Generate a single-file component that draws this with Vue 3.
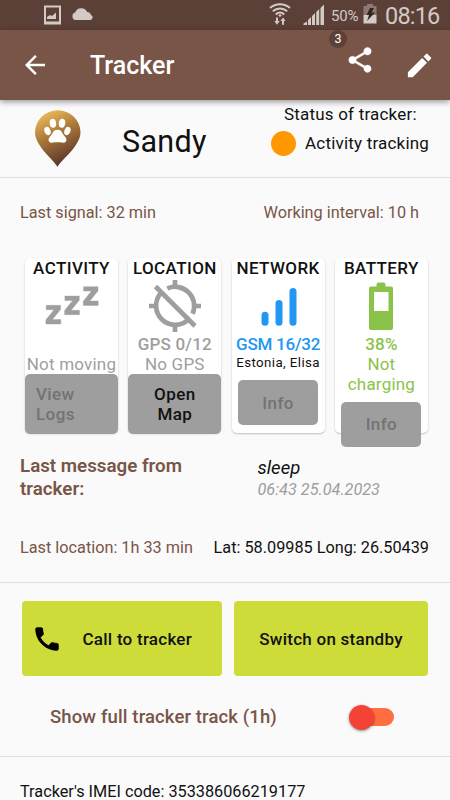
<template>
  <main class="screen">
    <div class="status-bar">
      <svg class="sys-left" width="52" height="30" viewBox="0 0 52 30" aria-hidden="true">
        <path d="M1 5.500h17v19H1zM3 7.500v14h13v-14z" fill="#d3cac6" fill-rule="evenodd" />
        <path d="M4 19v-2l3-2 2 1 4-3.500V19z" fill="#d3cac6" />
        <path d="M32.500 20a3.800 3.800 0 0 1-.3-7.400 6.400 6.400 0 0 1 11.900-.7 4.200 4.200 0 0 1 3.900 3 2.700 2.700 0 0 1-.4 5.100z" fill="#d3cac6" />
      </svg>
      <svg class="sys-wifi" width="22" height="26" viewBox="0 0 22 26" aria-hidden="true">
        <g fill="none" stroke="#d3cac6" stroke-width="1.900">
          <path d="M1 6c5.500-5 14.500-5 20 0" />
          <path d="M3.800 9.300c4.200-3.800 10.200-3.800 14.400 0" />
          <path d="M6.700 12.500c2.600-2.400 6-2.400 8.600 0" />
        </g>
        <path d="M7 15.500h2V19h1.700L8 22.700 5.300 19H7zM13 22.700V19h-1.600L14 15.500l2.600 3.500H15v3.700zM9.200 13.600l1.800-1.500 1.800 1.500-1.800 1.500z" fill="#d3cac6" />
      </svg>
      <svg class="sys-signal" width="22" height="22" viewBox="0 0 22 22" aria-hidden="true">
        <path d="M.5 21v-1.500l3.500-2v3.500zM5 21v-5l3-3v8zM9 21v-9l3-3v12zM13.200 21V8l3-3v16zM17.500 21V4L21 .5V21z" fill="#d3cac6" />
      </svg>
      <span class="percent">50%</span>
      <svg class="sys-battery" width="14" height="20" viewBox="0 0 14 20" aria-hidden="true">
        <path d="M4 0h6v2h3.500v9H.5V2H4z" fill="#8b7a73" />
        <path d="M.5 11h13v8.500H.5z" fill="#d3cac6" />
        <path d="M7 4h4L8.500 8.500H12L4 17l2-6H3.500z" fill="#33241e" />
      </svg>
      <span class="clock">08:16</span>
    </div>

    <header class="app-bar">
      <button class="icon-btn back" aria-label="Back">
        <svg width="30" height="30" viewBox="0 0 24 24">
          <path d="M20 11H7.830l5.590-5.590L12 4l-8 8 8 8 1.410-1.410L7.830 13H20v-2z" fill="#fff" />
        </svg>
      </button>
      <h1>Tracker</h1>
      <button class="icon-btn share" aria-label="Share">
        <svg width="30" height="30" viewBox="0 0 24 24">
          <path d="M18 16.080c-.76 0-1.440.3-1.960.770L8.910 12.700c.05-.23.09-.46.09-.7s-.04-.47-.09-.7l7.050-4.110c.54.5 1.250.81 2.040.81 1.660 0 3-1.340 3-3s-1.340-3-3-3-3 1.340-3 3c0 .24.04.47.09.7L8.040 9.810C7.500 9.310 6.790 9 6 9c-1.660 0-3 1.340-3 3s1.340 3 3 3c.79 0 1.500-.31 2.040-.81l7.120 4.160c-.05.21-.08.43-.08.65 0 1.610 1.310 2.920 2.920 2.920s2.920-1.310 2.920-2.920-1.310-2.920-2.920-2.920z" fill="#fff" stroke="#fff" stroke-width="0.300" />
        </svg>
        <span class="count">3</span>
      </button>
      <button class="icon-btn edit" aria-label="Edit">
        <svg width="31" height="31" viewBox="0 0 24 24">
          <path d="M3 17.250V21h3.750L17.810 9.940l-3.750-3.750L3 17.250zM20.710 7.040c.39-.39.39-1.020 0-1.410l-2.340-2.340c-.39-.39-1.020-.39-1.410 0l-1.830 1.830 3.750 3.750 1.830-1.830z" fill="#fff" />
        </svg>
      </button>
    </header>

    <section class="pet">
      <svg class="pin" width="48" height="58" viewBox="0 0 48 58" aria-hidden="true">
        <defs>
          <linearGradient id="gold" x1="0.250" y1="0" x2="0.650" y2="1">
            <stop offset="0" stop-color="#efbd5b" />
            <stop offset="0.450" stop-color="#a67537" />
            <stop offset="1" stop-color="#512d2c" />
          </linearGradient>
        </defs>
        <path d="M23.500 57C20 50 1 36 1 22.500a22.700 22.200 0 0 1 45.500 0C46.500 36 27 50 23.500 57z" fill="url(#gold)" />
        <g fill="#fff">
          <ellipse cx="18.900" cy="13.200" rx="3.200" ry="4.500" transform="rotate(-8 18.900 13.200)" />
          <ellipse cx="28" cy="13.200" rx="3.200" ry="4.500" transform="rotate(8 28 13.200)" />
          <ellipse cx="13.500" cy="21" rx="3" ry="4.300" transform="rotate(-20 13.500 21)" />
          <ellipse cx="33.400" cy="21" rx="3" ry="4.300" transform="rotate(20 33.400 21)" />
          <path d="M23.500 19.800c4.200 0 4.700 3.600 6.500 5.800 1.600 2 2.800 3.200 2.400 4.800-.5 2.100-2.500 2.500-4.400 2.200-3-.5-6-.5-9 0-1.900.3-3.900-.1-4.400-2.200-.4-1.600.8-2.800 2.400-4.800 1.800-2.200 2.300-5.800 6.500-5.800z" />
        </g>
      </svg>
      <h2>Sandy</h2>
      <div class="tracker-status">
        <p class="label">Status of tracker:</p>
        <p class="value"><i class="dot"></i><span>Activity tracking</span></p>
      </div>
    </section>

    <section class="signal-row">
      <span class="last-signal">Last signal: 32 min</span>
      <span class="interval">Working interval: 10 h</span>
    </section>

    <section class="cards">
      <article class="card activity">
        <h3>ACTIVITY</h3>
        <div class="glyph">
          <svg width="56" height="60" viewBox="0 0 56 60">
            <path id="zed" d="M2.200 29.300h14.400v4.200L8.400 43.600h8.400V48H1.900v-4.200l8.100-10.100H2.200z" fill="#9e9e9e" stroke="#9e9e9e" stroke-width="0.400" />
            <use href="#zed" x="18.700" y="-9.300" />
            <use href="#zed" x="37.400" y="-18.600" />
          </svg>
        </div>
        <p class="reading"></p>
        <p class="detail">Not moving</p>
        <button class="block left" disabled>View Logs</button>
      </article>

      <article class="card location">
        <h3>LOCATION</h3>
        <div class="glyph">
          <svg width="54" height="60" viewBox="0 0 54 60">
            <g fill="none" stroke="#9e9e9e" stroke-width="4.700">
              <path d="M19.300 12.400A19.200 19.200 0 0 1 44.600 37.700" />
              <path d="M12.900 17A19.200 19.200 0 0 0 40 44.100" />
              <path d="M7.500 10.500L47 50M27 4v7M27 49v7M1 30h7M46 30h7" />
            </g>
          </svg>
        </div>
        <p class="reading">GPS 0/12</p>
        <p class="detail">No GPS</p>
        <button class="block">Open Map</button>
      </article>

      <article class="card network">
        <h3>NETWORK</h3>
        <div class="glyph">
          <svg width="40" height="60" viewBox="0 0 40 60">
            <g fill="#2196f3">
              <rect x="3.500" y="35.700" width="7" height="14" rx="3.500" />
              <rect x="17.500" y="24" width="7" height="25.700" rx="3.500" />
              <rect x="31.500" y="12" width="7" height="37.700" rx="3.500" />
            </g>
          </svg>
        </div>
        <p class="reading">GSM 16/32</p>
        <p class="operator">Estonia, Elisa</p>
        <button class="small" disabled>Info</button>
      </article>

      <article class="card battery">
        <h3>BATTERY</h3>
        <div class="glyph">
          <svg width="26" height="60" viewBox="0 0 26 60">
            <path d="M8.500 8.500q0-2 2-2h5q2 0 2 2v2H23a2 2 0 0 1 2 2V52a2 2 0 0 1-2 2H3a2 2 0 0 1-2-2V12.500a2 2 0 0 1 2-2h5.500z" fill="#8bc34a" />
            <path d="M6 16h14.500v19H6z" fill="#fff" />
          </svg>
        </div>
        <p class="reading">38%</p>
        <p class="detail">Not charging</p>
        <button class="small" disabled>Info</button>
      </article>
    </section>

    <section class="message">
      <h4>Last message from tracker:</h4>
      <div class="text">
        <p class="body">sleep</p>
        <p class="time">06:43 25.04.2023</p>
      </div>
    </section>

    <section class="location-row">
      <span class="ago">Last location: 1h 33 min</span>
      <span class="coords">Lat: 58.09985 Long: 26.50439</span>
    </section>

    <section class="controls">
      <div class="actions">
        <button class="call">
          <svg width="30" height="30" viewBox="0 0 24 24" aria-hidden="true">
            <path
              d="M6.620 10.790c1.440 2.830 3.760 5.140 6.590 6.590l2.200-2.200c.27-.27.67-.36 1.020-.24 1.120.37 2.330.57 3.570.57.55 0 1 .45 1 1V20c0 .55-.45 1-1 1-9.390 0-17-7.610-17-17 0-.55.45-1 1-1h3.500c.55 0 1 .45 1 1 0 1.250.2 2.450.57 3.570.11.35.03.74-.25 1.020l-2.200 2.200z"
              stroke="#000"
              stroke-width="0.700"
            />
          </svg>
          <span>Call to tracker</span>
        </button>
        <button class="standby">Switch on standby</button>
      </div>
      <div class="track">
        <span class="track-label">Show full tracker track (1h)</span>
        <button
          class="switch"
          role="switch"
          :aria-checked="showTrack"
          :class="{ on: showTrack }"
          aria-label="Show full tracker track"
          @click="showTrack = !showTrack"
        >
          <i class="thumb"></i>
        </button>
      </div>
    </section>

    <footer class="imei"><span>Tracker's IMEI code: 353386066219177</span></footer>
  </main>
</template>

<script setup>
import { ref } from 'vue'

const showTrack = ref(false)
</script>

<style>
body {
  margin: 0;
  background: #fafafa;
}
</style>

<style scoped>
.screen {
  width: 450px;
  height: 800px;
  overflow: hidden;
  background: #fafafa;
  color: #111;
  font-family: Roboto, "Liberation Sans", sans-serif;
  font-size: 16.25px;
}

.screen * {
  box-sizing: border-box;
}

h1, h2, h3, h4, p {
  margin: 0;
}

button {
  border: 0;
  padding: 0;
  font: inherit;
  letter-spacing: inherit;
  color: inherit;
  background: none;
}

svg {
  display: block;
  flex: none;
}

span {
  white-space: nowrap;
}

.status-bar {
  display: flex;
  height: 30px;
  padding-left: 43px;
  background: #5b4037;
  color: #d3cac6;
}

.sys-wifi {
  margin: 2px 0 0 174px;
}

.sys-signal {
  margin: 4px 0 0 12px;
}

.percent {
  margin-left: 6px;
  font-size: 15px;
  line-height: 32px;
  width: 30px;
  letter-spacing: -0.2px;
}

.sys-battery {
  margin: 4px 0 0 2px;
}

.clock {
  margin-left: 8px;
  font-size: 23.5px;
  line-height: 33px;
  letter-spacing: -0.8px;
}

.app-bar {
  position: relative;
  display: flex;
  height: 70px;
  padding: 0 15px 0 20px;
  background: #795548;
  color: #fff;
  box-shadow: 0 2px 6px rgba(0, 0, 0, 0.4);
}

.back {
  height: 70px;
}

.app-bar h1 {
  flex: 1;
  margin-left: 40px;
  font-size: 25px;
  font-weight: 500;
  line-height: 71px;
}

.share {
  position: relative;
  height: 60px;
  margin-right: 29px;
}

.count {
  position: absolute;
  left: -16px;
  top: 0;
  width: 18px;
  height: 18px;
  border-radius: 50%;
  background: #5d4037;
  font-size: 12.5px;
  line-height: 17px;
  text-align: center;
}

.edit {
  height: 70px;
}

.pet {
  display: flex;
  height: 78px;
  padding-left: 34px;
  border-bottom: 1px solid #dedede;
}

.pin {
  margin-top: 10px;
}

.pet h2 {
  width: 148px;
  margin-left: 40px;
  font-size: 30.5px;
  font-weight: 400;
  line-height: 83px;
  letter-spacing: 0.3px;
}

.tracker-status {
  padding-top: 4px;
  font-size: 17px;
  letter-spacing: 0.2px;
}

.tracker-status .label {
  margin-left: 14px;
  line-height: 21px;
}

.tracker-status .value {
  display: flex;
  align-items: center;
  height: 36px;
  padding-left: 1px;
}

.dot {
  width: 25px;
  height: 25px;
  margin-right: 9px;
  border-radius: 50%;
  background: #ff9800;
}

.signal-row {
  display: flex;
  justify-content: space-between;
  height: 80px;
  padding: 0 31px 0 20px;
  line-height: 70px;
  color: #795548;
}

.cards {
  display: grid;
  grid-template-columns: repeat(4, 93px);
  column-gap: 10.3px;
  height: 188px;
  padding-left: 25px;
}

.card {
  display: flex;
  flex-direction: column;
  align-items: center;
  height: 175px;
  border-radius: 5px;
  background: #fff;
  box-shadow: 0 1px 2px rgba(0, 0, 0, 0.24);
  font-size: 17px;
  line-height: 20px;
  letter-spacing: 0.2px;
  text-align: center;
  color: #9e9e9e;
}

.card > * {
  flex: none;
}

.card h3 {
  font-size: 17px;
  font-weight: 500;
  letter-spacing: 0.4px;
  color: #111;
}

.glyph {
  height: 56px;
}

.glyph svg {
  margin-top: -2px;
}

.reading {
  height: 20px;
  font-weight: 500;
}

.network .reading {
  color: #2196f3;
  letter-spacing: -0.25px;
}

.operator {
  height: 26px;
  font-size: 13.3px;
  line-height: 18px;
  letter-spacing: 0.4px;
  color: #111;
}

.battery {
  color: #8bc34a;
}

.battery .detail {
  margin-bottom: 7.5px;
}

.block,
.small {
  border-radius: 5px;
  background: #9e9e9e;
  color: #737373;
  font-weight: 500;
  letter-spacing: 0.4px;
}

.block {
  width: 93px;
  height: 60px;
  padding: 0 22px;
  color: #111;
}

.block.left {
  padding: 0 30px 0 11px;
  text-align: left;
  color: #737373;
}

.small {
  width: 80px;
  height: 45px;
}

.message {
  display: flex;
  height: 64px;
  padding: 9px 0 0 20px;
}

.message h4 {
  width: 237.5px;
  padding-right: 50px;
  font-size: 18.75px;
  font-weight: 600;
  line-height: 22.5px;
  color: #795548;
}

.message .text {
  font-style: italic;
}

.message .body {
  font-size: 18.5px;
  line-height: 26px;
}

.message .time {
  line-height: 17px;
  color: #9e9e9e;
}

.location-row {
  display: flex;
  justify-content: space-between;
  height: 73px;
  padding: 0 21px 0 20px;
  border-bottom: 1px solid #dedede;
  line-height: 76px;
}

.ago {
  color: #795548;
}

.controls {
  height: 174px;
  padding: 18px 22px 0;
  border-bottom: 1px solid #dedede;
}

.actions {
  display: grid;
  grid-template-columns: 200px 194px;
  column-gap: 12px;
  height: 75px;
}

.actions button {
  border-radius: 4px;
  background: #cddc39;
  color: #111;
  font-size: 17px;
  font-weight: 500;
  letter-spacing: 0.25px;
}

.call {
  display: flex;
  align-items: center;
  padding-left: 10px;
}

.call span {
  margin-left: 20.5px;
}

.track {
  display: flex;
  align-items: center;
  justify-content: space-between;
  height: 82px;
  padding: 0 34px 0 28px;
}

.track-label {
  font-size: 18.5px;
  font-weight: 500;
  letter-spacing: 0.12px;
  color: #795548;
}

.switch {
  display: flex;
  align-items: center;
  width: 44px;
  height: 18px;
  border-radius: 9px;
  background: #ff6e40;
}

.thumb {
  flex: none;
  width: 25px;
  height: 25px;
  margin-left: -1.5px;
  border-radius: 50%;
  background: #f44336;
  box-shadow: 0 1px 3px rgba(0, 0, 0, 0.45);
}

.switch.on .thumb {
  margin-left: 20.5px;
}

.imei {
  padding-left: 20px;
  line-height: 69px;
}
</style>
